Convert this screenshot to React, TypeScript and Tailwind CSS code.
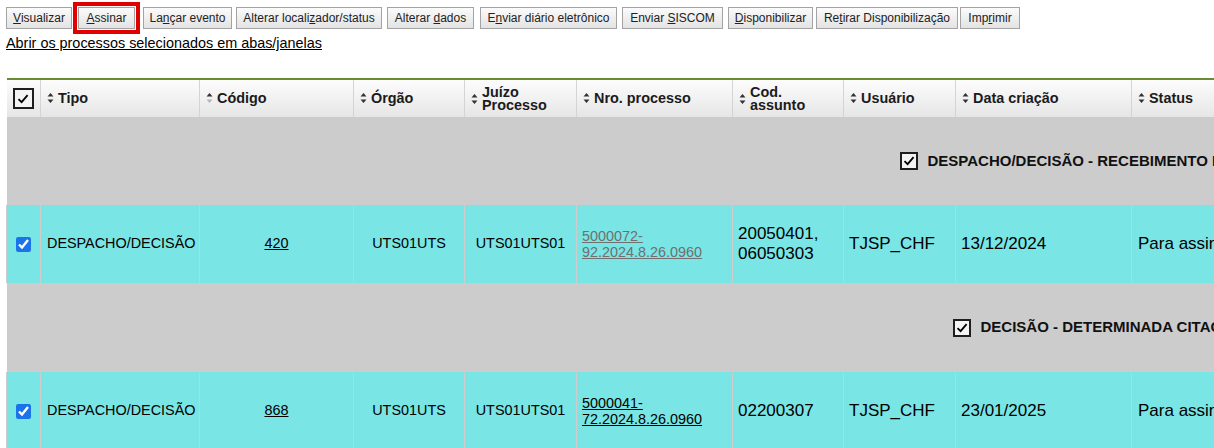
import React from "react";

type Btn = { pre: string; key: string; post: string; w: string; ml: string };

const botoes: Btn[] = [
  { pre: "", key: "V", post: "isualizar", w: "w-[66px]", ml: "ml-[6px]" },
  { pre: "", key: "A", post: "ssinar", w: "w-[57px]", ml: "ml-[1px]" },
  { pre: "La", key: "n", post: "çar evento", w: "w-[89px]", ml: "ml-[3px]" },
  { pre: "Alterar locali", key: "z", post: "ador/status", w: "w-[146px]", ml: "ml-[4px]" },
  { pre: "Alterar ", key: "d", post: "ados", w: "w-[87px]", ml: "ml-[5px]" },
  { pre: "E", key: "n", post: "viar diário eletrônico", w: "w-[137px]", ml: "ml-[6px]" },
  { pre: "Enviar ", key: "S", post: "ISCOM", w: "w-[101px]", ml: "ml-[5px]" },
  { pre: "", key: "D", post: "isponibilizar", w: "w-[85px]", ml: "ml-[5px]" },
  { pre: "Re", key: "t", post: "irar Disponibilização", w: "w-[142px]", ml: "ml-[3px]" },
  { pre: "Imp", key: "r", post: "imir", w: "w-[60px]", ml: "ml-[2px]" },
];

const Botao = ({ b }: { b: Btn }) => (
  <button
    className={`${b.w} h-[22px] flex items-center justify-center border border-[#a3a3a3] bg-gradient-to-b from-[#fbfbfb] to-[#e3e3e3] text-[12px] text-[#222] whitespace-nowrap`}
  >
    <span className="whitespace-pre">
      {b.pre}
      <span className="underline">{b.key}</span>
      {b.post}
    </span>
  </button>
);

const Seta = ({ baixoClaro }: { baixoClaro?: boolean }) => (
  <svg width="7" height="12" viewBox="0 0 7 12" className="shrink-0">
    <polygon points="0.5,4.5 3.5,1 6.5,4.5" fill="#333" />
    <polygon points="0.5,7.5 3.5,11 6.5,7.5" fill={baixoClaro ? "#b5b5b5" : "#333"} />
  </svg>
);

const Caixa = ({ size }: { size: "lg" | "md" }) => (
  <span
    className={`${size === "lg" ? "w-[21px] h-[21px]" : "w-[18px] h-[18px]"} shrink-0 inline-flex items-center justify-center border-2 border-[#1e1e1e] bg-[#f4f4f4]`}
  >
    <svg width="14" height="14" viewBox="0 0 14 14">
      <path d="M2.5 7.2 L5.6 10.2 L11.6 3.2" fill="none" stroke="#000" strokeWidth="1.8" />
    </svg>
  </span>
);

const cab = [
  { t: "Tipo" },
  { t: "Código", claro: true },
  { t: "Órgão" },
  { t: "Juízo Processo", duas: ["Juízo", "Processo"] },
  { t: "Nro. processo" },
  { t: "Cod. assunto", duas: ["Cod.", "assunto"] },
  { t: "Usuário" },
  { t: "Data criação" },
  { t: "Status" },
];

type Linha = {
  grupo: string;
  pl: string;
  altura: string;
  codigo: string;
  proc: [string, string];
  visitado: boolean;
  assunto: string[];
  data: string;
};

const linhas: Linha[] = [
  {
    grupo: "DESPACHO/DECISÃO - RECEBIMENTO DA DENÚNCIA",
    pl: "pl-[893px]",
    altura: "h-[88px]",
    codigo: "420",
    proc: ["5000072-", "92.2024.8.26.0960"],
    visitado: true,
    assunto: ["20050401,", "06050303"],
    data: "13/12/2024",
  },
  {
    grupo: "DECISÃO - DETERMINADA CITAÇÃO",
    pl: "pl-[946px]",
    altura: "h-[89px]",
    codigo: "868",
    proc: ["5000041-", "72.2024.8.26.0960"],
    visitado: false,
    assunto: ["02200307"],
    data: "23/01/2025",
  },
];

const td = "border-x border-[#cdcdcd] align-middle";

export default function App() {
  return (
    <div className="w-full h-[448px] overflow-hidden bg-white font-['Liberation_Sans',Arial,sans-serif] text-black">
      <div className="flex items-center h-[32px] mt-[2px]">
        {botoes.map((b, i) =>
          i === 1 ? (
            <div key={i} className="ml-[1px] border-[4px] border-[#e00000] px-[1px] py-[1px]">
              <Botao b={b} />
            </div>
          ) : (
            <div key={i} className={b.ml}>
              <Botao b={b} />
            </div>
          )
        )}
      </div>
      <div className="ml-[6px] mt-[1px] text-[14.4px] leading-[17px]">
        <a className="underline cursor-pointer">Abrir os processos selecionados em abas/janelas</a>
      </div>

      <table className="ml-[6px] mt-[26px] w-[1325px] table-fixed border-collapse border-t-2 border-[#6a8a34]">
        <colgroup>
          <col className="w-[34px]" />
          <col className="w-[159px]" />
          <col className="w-[154px]" />
          <col className="w-[111px]" />
          <col className="w-[112px]" />
          <col className="w-[156px]" />
          <col className="w-[111px]" />
          <col className="w-[112px]" />
          <col className="w-[176px]" />
          <col className="w-[200px]" />
        </colgroup>
        <thead>
          <tr className="h-[38px] bg-gradient-to-b from-[#fdfdfd] to-[#e6e6e6]">
            <th className="border-r border-[#d4d4d4] align-middle">
              <div className="flex justify-center">
                <Caixa size="lg" />
              </div>
            </th>
            {cab.map((c) => (
              <th key={c.t} className="border-r border-[#d4d4d4] px-[6px] text-left align-middle">
                <div className="flex items-center gap-[4px] text-[14.4px] font-bold text-[#1b1b1b]">
                  <Seta baixoClaro={c.claro} />
                  {c.duas ? (
                    <span className="leading-[13px]">
                      {c.duas[0]}
                      <br />
                      {c.duas[1]}
                    </span>
                  ) : (
                    <span>{c.t}</span>
                  )}
                </div>
              </th>
            ))}
          </tr>
        </thead>
        <tbody>
          {linhas.map((l) => (
            <React.Fragment key={l.codigo}>
              <tr className={`${l.altura} bg-[#cccccc]`}>
                <td colSpan={10} className={`${l.pl} align-middle`}>
                  <div className="flex items-center gap-[10px] whitespace-nowrap">
                    <Caixa size="md" />
                    <span className="text-[15px] font-bold text-[#111]">{l.grupo}</span>
                  </div>
                </td>
              </tr>
              <tr className="h-[78px] bg-[#79e5e5]">
                <td className={`${td} text-center`}>
                  <input type="checkbox" defaultChecked className="w-[15px] h-[15px] align-middle accent-[#1a73e8]" />
                </td>
                <td className={`${td} px-[6px] text-[14.4px]`}>DESPACHO/DECISÃO</td>
                <td className={`${td} text-center text-[14.4px]`}>
                  <a className="underline">{l.codigo}</a>
                </td>
                <td className={`${td} text-center text-[14.4px]`}>UTS01UTS</td>
                <td className={`${td} text-center text-[14.4px]`}>UTS01UTS01</td>
                <td className={`${td} px-[5px] text-[14.4px] leading-[16px]`}>
                  <a className={`underline ${l.visitado ? "text-[#707070]" : "text-black"}`}>
                    {l.proc[0]}
                    <br />
                    {l.proc[1]}
                  </a>
                </td>
                <td className={`${td} px-[5px] text-[17px] leading-[20px]`}>
                  {l.assunto.map((a, i) => (
                    <div key={i}>{a}</div>
                  ))}
                </td>
                <td className={`${td} px-[5px] text-[17px]`}>TJSP_CHF</td>
                <td className={`${td} px-[5px] text-[17px]`}>{l.data}</td>
                <td className={`${td} px-[6px] text-[17px] whitespace-nowrap`}>Para assinar</td>
              </tr>
            </React.Fragment>
          ))}
        </tbody>
      </table>
    </div>
  );
}
